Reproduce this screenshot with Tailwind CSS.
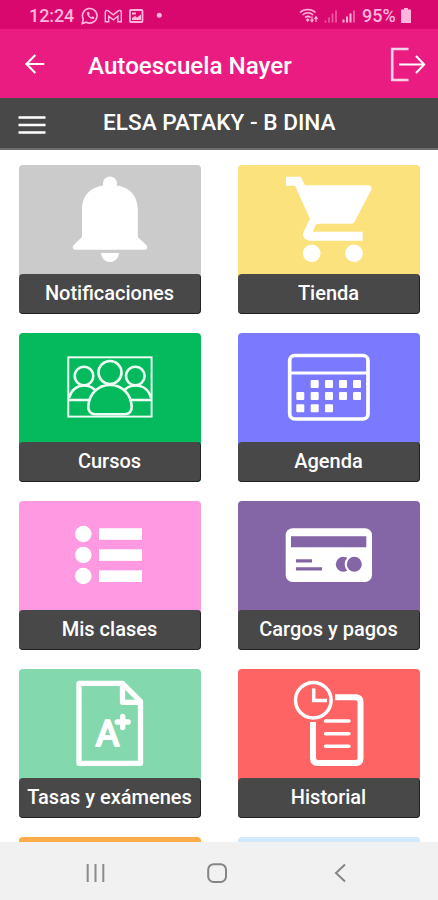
<!DOCTYPE html>
<html lang="es">

<head>
  <meta charset="UTF-8">
  <meta name="viewport" content="width=device-width, initial-scale=1.0">
  <title>Autoescuela Nayer</title>
  <script src="https://cdn.jsdelivr.net/npm/@tailwindcss/browser@4"></script>
</head>

<body class="bg-white">
  <div class="flex h-[900px] w-[438px] flex-col overflow-hidden font-['Roboto',sans-serif] text-white">

    <!-- Status bar -->
    <div class="flex h-[29px] shrink-0 items-center bg-[#d9086f] pt-[2px] pl-[29px] text-[#ffb5dc]">
      <span class="w-[52px] text-[18px] leading-none font-medium tracking-[-0.1px]">12:24</span>
      <svg class="h-[18px] w-[84px]" viewBox="0 0 84 18" fill="none" stroke="currentColor" stroke-width="1.6">
        <path d="M1.2 16.5 2.3 12.2A7.3 7.3 0 1 1 5.3 15.2Z" />
        <path d="M6.2 5.2c-1 2.800 2.600 7 5.800 6.800 1.300-.2 1.700-1.400.8-2l-1.300-.7-1 .9c-1.200-.5-2-1.300-2.500-2.500l.8-.9-.7-1.600c-.3-.7-1.300-.7-1.900 0Z" fill="currentColor" stroke="none" />
        <path d="M24.3 14.8V5.2c0-2 2-2.200 3-1.300l5 4 5-4c1-.9 3-.7 3 1.300v9.600h-3.400V9.300l-4.600 3.600-4.600-3.600v5.500Z" stroke-width="1.4" />
        <rect x="49" y="3" width="12.5" height="12" rx="1" stroke-width="1.8" />
        <path d="M51 5.500h4v2h-4zM51 13v-2l3-2 2 1.500 4-3V13z" fill="currentColor" stroke="none" />
        <circle cx="78.300" cy="8.300" r="2.500" fill="currentColor" stroke="none" />
      </svg>
      <svg class="ml-[134px] h-[18px] w-[58px]" viewBox="0 0 58 18" fill="none" stroke="currentColor" stroke-width="1.6">
        <path d="M1 5.500C5.500 1.400 12 1.400 16.500 5.500M3.500 8c3.200-2.800 7.500-2.800 10.700 0M6 10.500c2-1.500 4-1.500 5.700 0" />
        <path d="m8.800 11 1.700 2-1.700 2-2-2z" fill="currentColor" stroke="none" />
        <path d="M13 9.500v5m-1.500-1.800 1.500 2 1.500-2M17 15v-5m-1.500 1.800 1.500-2 1.500 2" stroke-width="1.200" />
        <path d="M26.500 15.500v-2M30 15.500v-5M33.500 15.500V6.500M37 15.500V3.500" opacity=".5" />
        <path d="M44.500 15.500v-3M48 15.500v-6M51.500 15.500v-9" stroke-width="2" />
        <path d="M55 15.500v-12" stroke-width="2" opacity=".5" />
      </svg>
      <span class="ml-[5px] w-[36px] text-[18px] leading-none font-medium">95%</span>
      <svg class="ml-[3px] h-[15px] w-[10px]" viewBox="0 0 10 15" fill="currentColor">
        <path d="M3 0h4v1.500h3V15H0V1.500h3z" />
      </svg>
    </div>

    <!-- App bar -->
    <header class="flex h-[69px] shrink-0 items-center bg-[#eb1c81] pt-px">
      <svg class="ml-[25px] h-[20px] w-[20px]" viewBox="0 0 20 20" fill="none" stroke="#fff" stroke-width="2.200">
        <path d="M19.300 10H2M10.300 1 1.500 10l8.800 9" />
      </svg>
      <h1 class="mt-[4px] ml-[43px] w-[302px] text-[24.200px] leading-none font-medium whitespace-nowrap">Autoescuela Nayer</h1>
      <svg class="h-[35px] w-[36px]" viewBox="0 0 36 35" fill="none" stroke="#fff">
        <path d="M18.500 2H2.200v31h16.300" stroke-width="2.600" stroke="#ffd3ea" />
        <path d="M9 17.500h25M26 9l8.200 8.500L26 26" stroke-width="2" />
      </svg>
    </header>

    <!-- Student bar -->
    <div class="flex h-[52px] shrink-0 items-center border-b-2 border-[#6e6e6e] bg-[#484848]">
      <svg class="mt-[4px] ml-[18px] h-[20px] w-[28px]" viewBox="0 0 28 20" stroke="#fff" stroke-width="2.700">
        <path d="M0.500 2.500h27M0.500 10h27M0.500 17.500h27" />
      </svg>
      <h2 class="mt-px ml-[57px] text-[22.600px] leading-none font-medium whitespace-nowrap">ELSA PATAKY - B DINA</h2>
    </div>

    <!-- Menu -->
    <main class="grid flex-1 grid-cols-[182px_182px] content-start gap-x-[37px] gap-y-[19px] overflow-hidden bg-white pt-[15px] pl-[19px] text-center text-[20px] font-medium">

      <a class="block h-[149px] rounded-[4px] bg-[#cbcbcb]">
        <svg class="h-[109px] w-[182px]" viewBox="0 0 182 109" fill="#fff">
          <circle cx="91" cy="18.500" r="7" />
          <path d="M63 72V45c0-14 8-25 28-25s27.800 11 27.800 25v27l8.700 8.300c1.500 2 .5 4.400-1.500 4.400H56c-2 0-3-2.400-1.500-4.400Z" />
          <path d="M82 88h18c-1 12-17 12-18 0Z" />
        </svg>
        <div class="h-[40px] rounded-[4px] border-r border-b border-[#222] bg-[#484848] leading-[38px]">Notificaciones</div>
      </a>

      <a class="block h-[149px] rounded-[4px] bg-[#fbe27d]">
        <svg class="h-[109px] w-[182px]" viewBox="0 0 182 109" fill="#fff">
          <path d="M48 11.700h14.700l4.300 8.600h63c3 0 4.400 2.500 3 5L117 56c-1 1.800-2 2.700-4 2.700H81c-2 0-3 .8-3.700 2.300l-2.600 5.700h50v9H72c-4.500 0-8.500-4.500-6.500-9L72 54 57 20.700h-9Z" />
          <circle cx="73.700" cy="88.300" r="8.800" />
          <circle cx="116" cy="88.300" r="8.800" />
        </svg>
        <div class="h-[40px] rounded-[4px] border-r border-b border-[#222] bg-[#484848] leading-[38px]">Tienda</div>
      </a>

      <a class="block h-[149px] rounded-[4px] bg-[#04ba5d]">
        <svg class="h-[109px] w-[182px]" viewBox="0 0 182 109" fill="none" stroke="#f0fff6" stroke-width="2.600">
          <rect x="49.300" y="24.300" width="83.300" height="59.300" stroke-width="1.900" />
          <circle cx="91" cy="39.500" r="11.500" />
          <circle cx="65" cy="43" r="9.300" />
          <circle cx="116.300" cy="43" r="9.300" />
          <path d="M76 81.300c-4 0-7-3-6.700-8C70 61 79 52 91 52s21 9 21.700 21.300c.3 5-2.700 8-6.700 8Z" />
          <path d="M50 65c2-8 8-12.500 15-12.500 4 0 8 1.500 11 4.500M132 65c-2-8-8-12.500-15.500-12.500-4 0-8 1.500-11 4.500" />
          <path d="M50 67h20.500M111.500 67H132" />
        </svg>
        <div class="h-[40px] rounded-[4px] border-r border-b border-[#222] bg-[#484848] leading-[38px]">Cursos</div>
      </a>

      <a class="block h-[149px] rounded-[4px] bg-[#7b79fe]">
        <svg class="h-[109px] w-[182px]" viewBox="0 0 182 109" fill="#fff">
          <rect x="51.700" y="22.500" width="78.300" height="63.500" rx="5" fill="none" stroke="#fff" stroke-width="3.700" />
          <path d="M52 40h78" stroke="#fff" stroke-width="2.800" />
          <!-- Days of the month -->
          <rect x="72.700" y="47" width="8" height="8" rx="1" />
          <rect x="87" y="47" width="8" height="8" rx="1" />
          <rect x="101" y="47" width="8" height="8" rx="1" />
          <rect x="115" y="47" width="8" height="8" rx="1" />
          <rect x="58.300" y="59" width="8" height="8" rx="1" />
          <rect x="72.700" y="59" width="8" height="8" rx="1" />
          <rect x="87" y="59" width="8" height="8" rx="1" />
          <rect x="101" y="59" width="8" height="8" rx="1" />
          <rect x="115" y="59" width="8" height="8" rx="1" />
          <rect x="58.300" y="71.300" width="8" height="8" rx="1" />
          <rect x="72.700" y="71.300" width="8" height="8" rx="1" />
          <rect x="87" y="71.300" width="8" height="8" rx="1" />
        </svg>
        <div class="h-[40px] rounded-[4px] border-r border-b border-[#222] bg-[#484848] leading-[38px]">Agenda</div>
      </a>

      <a class="block h-[149px] rounded-[4px] bg-[#fe99e2]">
        <svg class="h-[109px] w-[182px]" viewBox="0 0 182 109" fill="#fff">
          <circle cx="64.300" cy="33" r="8.300" />
          <circle cx="64.300" cy="54" r="8.300" />
          <circle cx="64.300" cy="75" r="8.300" />
          <rect x="80" y="27.200" width="43" height="11.600" />
          <rect x="80" y="48.300" width="43" height="11.600" />
          <rect x="80" y="69.400" width="43" height="11.600" />
        </svg>
        <div class="h-[40px] rounded-[4px] border-r border-b border-[#222] bg-[#484848] leading-[38px]">Mis clases</div>
      </a>

      <a class="block h-[149px] rounded-[4px] bg-[#8466a7]">
        <svg class="h-[109px] w-[182px]" viewBox="0 0 182 109" fill="#8466a7">
          <rect x="47.700" y="27.300" width="86.300" height="53.700" rx="7" fill="#fff" />
          <path d="M53 35.300h75.300v11H53zM58 58.300h16v3.300H58zM58 66.200h26v3.300H58z" />
          <circle cx="105.300" cy="63.300" r="7.500" />
          <circle cx="116.300" cy="63.300" r="9.600" fill="#fff" />
          <circle cx="116.300" cy="63.300" r="7.500" />
        </svg>
        <div class="h-[40px] rounded-[4px] border-r border-b border-[#222] bg-[#484848] leading-[38px]">Cargos y pagos</div>
      </a>

      <a class="block h-[149px] rounded-[4px] bg-[#84d8ae]">
        <svg class="h-[109px] w-[182px]" viewBox="0 0 182 109" fill="none" stroke="#fff" stroke-width="5.300" stroke-linejoin="round" stroke-linecap="round">
          <path d="M103.500 14.300H60v80h61.500v-62ZV33.300h18" />
          <path d="M103.700 47.500v11M98.200 53h11" />
          <text x="88.500" y="77" text-anchor="middle" font-size="36" font-weight="400" fill="#fff" stroke-width="2.200">A</text>
        </svg>
        <div class="h-[40px] rounded-[4px] border-r border-b border-[#222] bg-[#484848] leading-[38px]">Tasas y exámenes</div>
      </a>

      <a class="block h-[149px] rounded-[4px] bg-[#fe6464]">
        <svg class="h-[109px] w-[182px]" viewBox="0 0 182 109" fill="none" stroke="#fff" stroke-width="3.500">
          <circle cx="75.300" cy="31.200" r="17.800" />
          <path d="M75.700 19.500v12H89" />
          <path d="M97 28.300h20.500q5 0 5 5V89q0 5-5 5H80q-5 0-5-5V53" stroke-width="6" />
          <path d="M87.500 52h23.500M87.500 64.700h23.500M87.500 77.300h23.500" stroke-linecap="round" />
        </svg>
        <div class="h-[40px] rounded-[4px] border-r border-b border-[#222] bg-[#484848] leading-[38px]">Historial</div>
      </a>

      <a class="block h-[149px] rounded-[4px] bg-[#feab4a]"></a>
      <a class="block h-[149px] rounded-[4px] bg-[#d0e9fc]"></a>
    </main>

    <!-- System navigation -->
    <nav class="flex h-[58px] shrink-0 items-center bg-[#f1f1f1] pt-[3px]">
      <svg class="ml-[86px] h-[18px] w-[19px]" viewBox="0 0 19 18" stroke="#8b8b8b" stroke-width="2">
        <path d="M1.700 0v18M9.500 0v18M17.300 0v18" />
      </svg>
      <svg class="ml-[102px] h-[20px] w-[20px]" viewBox="0 0 20 20" fill="none" stroke="#858585" stroke-width="2">
        <rect x="1.200" y="1.200" width="17.800" height="17.800" rx="5.500" />
      </svg>
      <svg class="ml-[107px] h-[20px] w-[12px]" viewBox="0 0 12 20" fill="none" stroke="#858585" stroke-width="2">
        <path d="M11 1.500 2 10l9 8.500" />
      </svg>
    </nav>
  </div>
</body>

</html>
